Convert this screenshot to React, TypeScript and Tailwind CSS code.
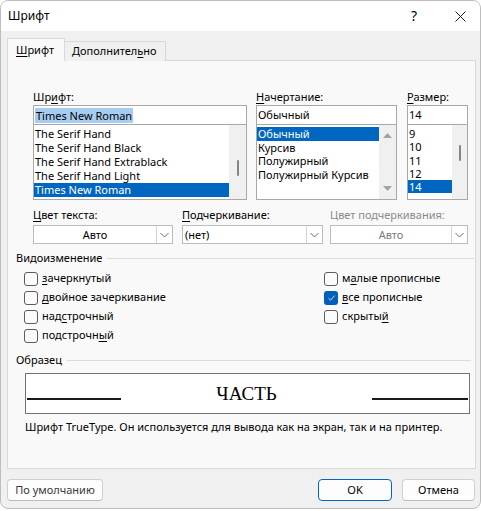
import React from 'react';

const U = ({ children }: { children: React.ReactNode }) => (
  <span className="underline decoration-1 underline-offset-[2px]">{children}</span>
);

function Checkbox({ checked = false }: { checked?: boolean }) {
  if (checked) {
    return (
      <div className="w-[14px] h-[14px] rounded-[3px] bg-[#005fb8] flex items-center justify-center">
        <svg width="9" height="8" viewBox="0 0 9 8">
          <path d="M1.5 4.2 L3.6 6.2 L7.6 1.6" stroke="#cfe2f7" strokeWidth="1" fill="none" />
        </svg>
      </div>
    );
  }
  return <div className="w-[14px] h-[14px] rounded-[3px] border border-[#5c5c5c] bg-[#fbfbfb]" />;
}

function Chevron() {
  return (
    <svg width="9" height="6" viewBox="0 0 9 6">
      <path d="M0.5 1 L4.5 5 L8.5 1" stroke="#6a6a6a" strokeWidth="1" fill="none" />
    </svg>
  );
}

function Dropdown({ text, w, center = false, disabled = false }: { text: string; w: string; center?: boolean; disabled?: boolean }) {
  return (
    <div className={`${w} h-[19px] flex bg-white border border-[#bcbcbc]`}>
      <div
        className={`flex-1 flex items-center leading-none ${center ? 'justify-center' : 'pl-[2px]'} ${
          disabled ? 'text-[#7a7a7a]' : 'text-black'
        }`}
      >
        {text}
      </div>
      <div className="w-[16px] border-l border-[#d4d4d4] flex items-center justify-center">
        <Chevron />
      </div>
    </div>
  );
}

function CheckRow({ checked, children }: { checked?: boolean; children: React.ReactNode }) {
  return (
    <div className="h-[19px] flex items-center gap-[4px]">
      <Checkbox checked={checked} />
      <span>{children}</span>
    </div>
  );
}

export default function App() {
  const fonts = ['The Serif Hand', 'The Serif Hand Black', 'The Serif Hand Extrablack', 'The Serif Hand Light', 'Times New Roman'];
  const styles = ['Обычный', 'Курсив', 'Полужирный', 'Полужирный Курсив'];
  const sizes = ['9', '10', '11', '12', '14'];

  return (
    <div
      className="w-[481px] h-[511px] bg-white text-[11px] text-black"
      style={{ fontFamily: '"Noto Sans", sans-serif' }}
    >
      <div className="w-[481px] h-[509px] border border-[#bdbdbd] rounded-[8px] overflow-hidden flex flex-col bg-[#f0f0f0]">
        {/* Title bar */}
        <div className="h-[30px] bg-white flex items-center pl-[7px] pr-[14px] text-[12px]">
          <span className="flex-1 leading-none">Шрифт</span>
          <span className="w-[10px] text-center text-[14px] leading-none mr-[36px]">?</span>
          <svg width="11" height="11" viewBox="0 0 11 11">
            <path d="M0.5 0.5 L10.5 10.5 M10.5 0.5 L0.5 10.5" stroke="#1a1a1a" strokeWidth="1" />
          </svg>
        </div>

        {/* Body */}
        <div className="flex-1 flex flex-col pt-[7px] pl-[6px] pr-[5px]">
          {/* Tabs */}
          <div className="flex items-end h-[23px] -mb-[1px] relative z-10">
            <div className="w-[58px] h-[23px] bg-[#f9f9f9] border border-b-0 border-[#d9d9d9] flex items-center pl-[8px]">
              <span>
                <U>Ш</U>рифт
              </span>
            </div>
            <div className="w-[101px] h-[20px] bg-[#f0f0f0] border border-l-0 border-b-0 border-[#d9d9d9] flex items-center pl-[7px]">
              <span>
                Дополнител<U>ь</U>но
              </span>
            </div>
          </div>

          {/* Panel */}
          <div className="w-[469px] h-[409px] bg-[#f9f9f9] border border-[#d9d9d9] pl-[8px] pr-[1px] pt-[28px] flex flex-col whitespace-nowrap">
            {/* Font / style / size */}
            <div className="flex pl-[17px] gap-[9px]">
              <div className="w-[214px] flex flex-col">
                <div className="h-[16px] leading-[16px]">
                  Шр<U>и</U>фт:
                </div>
                <div className="h-[20px] bg-white border border-[#a8a8a8] flex items-center pl-[1px]">
                  <span className="bg-[#a6cdf0] leading-[15px] px-[1px]">Times New Roman</span>
                </div>
                <div className="h-[76px] -mt-[1px] bg-white border border-[#a8a8a8] flex">
                  <div className="flex-1 pt-[2px] overflow-hidden">
                    {fonts.map((f, i) => (
                      <div
                        key={f}
                        className={`h-[14px] leading-[14px] pl-[1px] ${i === 4 ? 'bg-[#0067c0] text-white' : ''}`}
                      >
                        {f}
                      </div>
                    ))}
                  </div>
                  <div className="w-[17px] bg-[#f0f0f0] flex justify-center pt-[35px]">
                    <div className="w-[2px] h-[16px] bg-[#858585] rounded-full" />
                  </div>
                </div>
              </div>

              <div className="w-[141px] flex flex-col">
                <div className="h-[16px] leading-[16px]">
                  <U>Н</U>ачертание:
                </div>
                <div className="h-[20px] bg-white border border-[#a8a8a8] flex items-center pl-[1px]">
                  Обычный
                </div>
                <div className="h-[76px] -mt-[1px] bg-white border border-[#a8a8a8] flex">
                  <div className="flex-1 pt-[2px] overflow-hidden">
                    {styles.map((s, i) => (
                      <div
                        key={s}
                        className={`h-[13.6px] leading-[13.6px] pl-[1px] ${i === 0 ? 'bg-[#0067c0] text-white' : ''}`}
                      >
                        {s}
                      </div>
                    ))}
                  </div>
                  <div className="w-[17px] bg-[#f0f0f0] flex flex-col items-center justify-between py-[8px]">
                    <svg width="9" height="5" viewBox="0 0 9 5">
                      <path d="M0 5 L4.5 0 L9 5 Z" fill="#a3a3a3" />
                    </svg>
                    <svg width="9" height="5" viewBox="0 0 9 5">
                      <path d="M0 0 L4.5 5 L9 0 Z" fill="#a3a3a3" />
                    </svg>
                  </div>
                </div>
              </div>

              <div className="w-[61px] flex flex-col ml-[1px]">
                <div className="h-[16px] leading-[16px]">
                  <U>Р</U>азмер:
                </div>
                <div className="h-[20px] bg-white border border-[#a8a8a8] flex items-center pl-[1px]">
                  14
                </div>
                <div className="h-[76px] -mt-[1px] bg-white border border-[#a8a8a8] flex">
                  <div className="flex-1 pt-[2px] overflow-hidden">
                    {sizes.map((s, i) => (
                      <div
                        key={s}
                        className={`h-[13.25px] leading-[13.25px] pl-[1px] ${i === 4 ? 'bg-[#0067c0] text-white' : ''}`}
                      >
                        {s}
                      </div>
                    ))}
                  </div>
                  <div className="w-[15px] bg-[#f0f0f0] flex justify-center pt-[20px]">
                    <div className="w-[2px] h-[16px] bg-[#858585] rounded-full" />
                  </div>
                </div>
              </div>
            </div>

            {/* Colour / underline */}
            <div className="flex pl-[17px] mt-[7px]">
              <div className="w-[140px] flex flex-col gap-[2px]">
                <div className="h-[16px] leading-[16px]">
                  <U>Ц</U>вет текста:
                </div>
                <Dropdown text="Авто" w="w-[140px]" center />
              </div>
              <div className="w-[141px] flex flex-col gap-[2px] ml-[9px]">
                <div className="h-[16px] leading-[16px]">
                  <U>П</U>одчеркивание:
                </div>
                <Dropdown text="(нет)" w="w-[141px]" />
              </div>
              <div className="w-[138px] flex flex-col gap-[2px] ml-[7px]">
                <div className="h-[16px] leading-[16px] text-[#8a8a8a]">Цвет подчеркивания:</div>
                <Dropdown text="Авто" w="w-[138px]" center disabled />
              </div>
            </div>

            {/* Effects */}
            <div className="flex items-center gap-[5px] mt-[6px] h-[16px]">
              <span className="leading-[16px]">Видоизменение</span>
              <div className="flex-1 h-px bg-[#dcdcdc]" />
            </div>
            <div className="grid grid-cols-[300px_1fr] pl-[8px] mt-[3px]">
              <div className="flex flex-col">
                <CheckRow>
                  <U>з</U>ачеркнутый
                </CheckRow>
                <CheckRow>
                  <U>д</U>войное зачеркивание
                </CheckRow>
                <CheckRow>
                  над<U>с</U>трочный
                </CheckRow>
                <CheckRow>
                  подстрочн<U>ы</U>й
                </CheckRow>
              </div>
              <div className="flex flex-col">
                <CheckRow>
                  м<U>а</U>лые прописные
                </CheckRow>
                <CheckRow checked>
                  <U>в</U>се прописные
                </CheckRow>
                <CheckRow>
                  скрыты<U>й</U>
                </CheckRow>
              </div>
            </div>

            {/* Sample */}
            <div className="flex items-center gap-[5px] mt-[7px] h-[16px] pr-[3px]">
              <span className="leading-[16px]">Образец</span>
              <div className="flex-1 h-px bg-[#dcdcdc]" />
            </div>
            <div className="ml-[9px] mt-[5px] w-[445px] h-[41px] bg-white border border-[#747474] flex items-center px-[1px]">
              <div className="w-[94px] h-[2px] bg-[#1a1a1a] mt-[10px]" />
              <div
                className="flex-1 text-center text-[19px] leading-none text-black"
                style={{ fontFamily: '"Liberation Serif", serif' }}
              >
                ЧАСТЬ
              </div>
              <div className="w-[96px] h-[2px] bg-[#1a1a1a] mt-[10px]" />
            </div>
            <div className="ml-[9px] mt-[5px] leading-[16px]">
              Шрифт TrueType. Он используется для вывода как на экран, так и на принтер.
            </div>
          </div>

          {/* Buttons */}
          <div className="flex mt-[10px]">
            <div className="w-[96px] h-[22px] bg-[#fdfdfd] border border-[#d0d0d0] border-b-[#bcbcbc] rounded-[4px] flex items-center justify-center text-[#3a3a3a]">
              По умолчанию
            </div>
            <div className="flex-1" />
            <div className="w-[74px] h-[22px] bg-[#fdfdfd] border-[1.5px] border-[#0067c0] rounded-[4px] flex items-center justify-center">
              OK
            </div>
            <div className="w-[73px] h-[22px] ml-[10px] bg-[#fdfdfd] border border-[#d0d0d0] border-b-[#bcbcbc] rounded-[4px] flex items-center justify-center">
              Отмена
            </div>
          </div>
        </div>
      </div>
    </div>
  );
}
